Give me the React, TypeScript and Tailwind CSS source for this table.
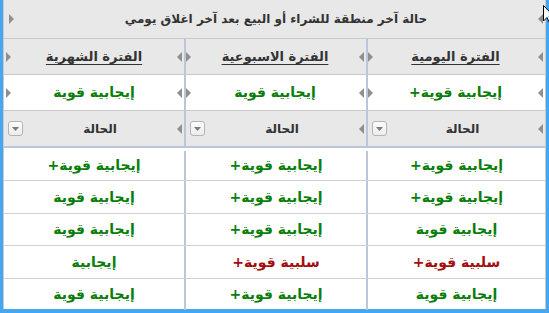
import React from "react"

type Tone = "pos" | "neg"

interface Cell {
  text: string
  tone: Tone
}

const FONT = "font-['DejaVu_Sans','Noto_Sans',sans-serif]"

const TITLE = "حالة آخر منطقة للشراء أو البيع بعد آخر اغلاق يومي"
const PERIODS = ["الفترة اليومية", "الفترة الاسبوعية", "الفترة الشهرية"]
const LAST_ZONE = ["إيجابية قوية+", "إيجابية قوية", "إيجابية قوية"]

const P = (text: string): Cell => ({ text, tone: "pos" })
const N = (text: string): Cell => ({ text, tone: "neg" })

// rows: daily, weekly, monthly (right to left)
const ROWS: Cell[][] = [
  [P("إيجابية قوية+"), P("إيجابية قوية+"), P("إيجابية قوية+")],
  [P("إيجابية قوية+"), P("إيجابية قوية+"), P("إيجابية قوية")],
  [P("إيجابية قوية"), P("إيجابية قوية+"), P("إيجابية قوية")],
  [N("سلبية قوية+"), N("سلبية قوية+"), P("إيجابية")],
  [P("إيجابية قوية"), P("إيجابية قوية+"), P("إيجابية قوية")],
]

const ROW_HEIGHTS = ["h-[30px]", "h-[33px]", "h-[32px]", "h-[33px]", "h-[31px]"]

// column widths, right column first (RTL)
const COL_CLASSES = [
  "w-[179px] shrink-0 border-l-2 border-[#bcc6da]",
  "w-[182px] shrink-0 border-l-2 border-[#bcc6da]",
  "flex-1 min-w-0",
]

const ArrowLeft = ({ className = "" }: { className?: string }) => (
  <svg width="5" height="10" viewBox="0 0 5 10" className={`shrink-0 ${className}`}>
    <polygon points="5,0 5,10 0,5" fill="#8f8f8f" />
  </svg>
)

const ArrowRight = ({ className = "" }: { className?: string }) => (
  <svg width="5" height="10" viewBox="0 0 5 10" className={`shrink-0 ${className}`}>
    <polygon points="0,0 0,10 5,5" fill="#8f8f8f" />
  </svg>
)

const DropButton = () => (
  <div className="ml-[4px] flex h-[15px] w-[15px] shrink-0 items-center justify-center rounded-[3px] border border-[#b4b4b4] bg-gradient-to-b from-[#fdfdfd] to-[#ececec]">
    <svg width="7" height="4" viewBox="0 0 7 4">
      <polygon points="0,0 7,0 3.5,4" fill="#7a7a7a" />
    </svg>
  </div>
)

const Cursor = () => (
  <svg
    width="12"
    height="19"
    viewBox="0 0 12 19"
    className="absolute left-[543px] top-[5px]"
  >
    <polygon points="0.5,0.5 0.5,16 4,12.5 6.5,18 8.5,17 6,11.5 11,11.5" fill="#fff" stroke="#000" strokeWidth="1" />
  </svg>
)

export default function App() {
  return (
    <div className={`relative h-[313px] w-[549px] overflow-hidden bg-[#45a6f2] px-[3px] pb-[4px] ${FONT}`}>
      <div dir="rtl" className="flex h-full flex-col border-x border-[#c9c9c9] bg-white">
        {/* Title */}
        <div className="flex h-[39px] shrink-0 items-center border-b border-[#c8c8c8] bg-[#e8e8e8]">
          <ArrowLeft className="mr-[2px]" />
          <div className="flex-1 text-center text-[12px] font-bold text-[#333]">{TITLE}</div>
          <ArrowRight className="ml-[5px]" />
        </div>

        {/* Period headers */}
        <div className="flex h-[36px] shrink-0 border-b border-[#c8c8c8] bg-[#e8e8e8]">
          {PERIODS.map((p, i) => (
            <div key={p} className={`flex items-center ${COL_CLASSES[i]}`}>
              <ArrowLeft className="mr-[2px]" />
              <div className="flex-1 text-center text-[13px] font-bold text-[#333] underline underline-offset-[3px]">
                {p}
              </div>
              <ArrowRight className={i === 2 ? "ml-[2px]" : "ml-0"} />
            </div>
          ))}
        </div>

        {/* Last zone */}
        <div className="flex h-[36px] shrink-0 border-b border-[#c8c8c8] bg-white">
          {LAST_ZONE.map((t, i) => (
            <div key={i} className={`flex items-center ${COL_CLASSES[i]}`}>
              <ArrowLeft className="mr-[2px]" />
              <div className="flex-1 text-center text-[14px] font-bold text-[#0a7d0a]">{t}</div>
              <ArrowRight className={i === 2 ? "ml-[2px]" : "ml-0"} />
            </div>
          ))}
        </div>

        {/* Status filter row */}
        <div className="flex h-[37px] shrink-0 border-b-2 border-[#bcc6da] bg-[#e8e8e8]">
          {PERIODS.map((p, i) => (
            <div key={p} className={`flex items-center ${COL_CLASSES[i]}`}>
              <ArrowLeft className="mr-[2px]" />
              <div className="flex-1 text-center text-[12px] font-bold text-[#333]">الحالة</div>
              <DropButton />
            </div>
          ))}
        </div>

        {/* Data */}
        <div className="flex flex-1 flex-col pt-[3px]">
          {ROWS.map((row, r) => (
            <div
              key={r}
              className={`flex shrink-0 ${ROW_HEIGHTS[r]} ${r < ROWS.length - 1 ? "border-b border-[#d0d0d0]" : ""}`}
            >
              {row.map((c, i) => (
                <div
                  key={i}
                  className={`flex items-center justify-center text-[14px] font-bold ${COL_CLASSES[i]} ${
                    c.tone === "pos" ? "text-[#0a7d0a]" : "text-[#a30d0d]"
                  }`}
                >
                  {c.text}
                </div>
              ))}
            </div>
          ))}
        </div>
      </div>
      <Cursor />
    </div>
  )
}
